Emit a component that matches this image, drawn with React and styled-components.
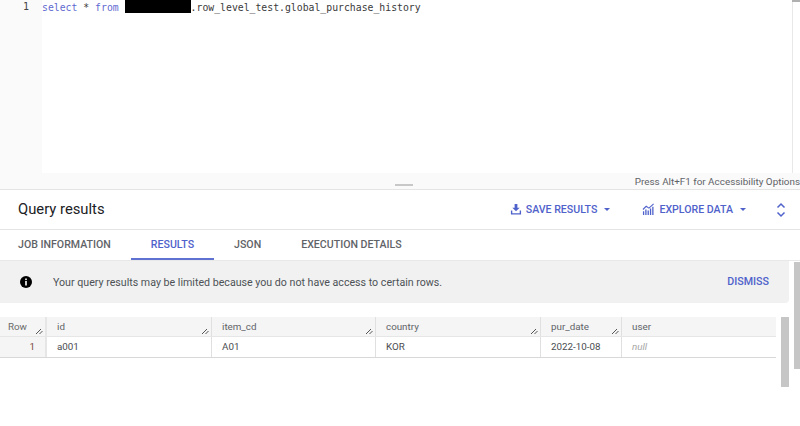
import React from 'react'
import styled, { createGlobalStyle } from 'styled-components'

const GlobalStyle = createGlobalStyle`
  html, body {
    margin: 0;
    padding: 0;
    background: #fff;
  }
  body {
    font-family: Roboto, "Liberation Sans", sans-serif;
    color: #3c4043;
    overflow: hidden;
  }
`

const Page = styled.div`
  width: 800px;
  height: 426px;
  overflow: hidden;
  background: #fff;
`

const Editor = styled.div`
  position: relative;
  height: 189px;
  display: flex;
  flex-direction: column;
  border-bottom: 1px solid #e4e4e4;
  background: #fafafa;
`

const EditorBody = styled.div`
  height: 173px;
  display: flex;
`

const Gutter = styled.div`
  width: 42px;
  padding: 0 13px 0 0;
  box-sizing: border-box;
  text-align: right;
  font-family: "DejaVu Sans Mono", monospace;
  font-size: 10px;
  line-height: 14px;
  color: #444;
`

const Code = styled.div`
  flex: 1;
  background: #fff;
  font-family: "DejaVu Sans Mono", monospace;
  font-size: 9.8px;
  line-height: 14px;
  white-space: pre;
  color: #3a3a3a;
`

const Keyword = styled.span`
  color: #5f6ad0;
`

const Redacted = styled.span`
  display: inline-block;
  width: 66px;
  height: 13px;
  vertical-align: -2px;
  background: #000;
`

const Minimap = styled.div`
  width: 8px;
  border-left: 1px solid #e8e8e8;
  margin-left: auto;
  background: #fff;
  box-sizing: border-box;
`

const MinimapThumb = styled.div`
  position: absolute;
  top: 0;
  right: 0;
  width: 8px;
  height: 2px;
  background: #b0b0b0;
`

const EditorFooter = styled.div`
  height: 16px;
  display: flex;
  align-items: center;
  justify-content: flex-end;
  font-size: 9.9px;
  color: #5f6368;
  white-space: nowrap;
`

const Grip = styled.div`
  position: absolute;
  left: 395px;
  bottom: 3px;
  width: 18px;
  height: 2px;
  background: #c8c8c8;
`

const ResultsHeader = styled.div`
  height: 39px;
  display: flex;
  align-items: center;
  padding: 0 14px 0 18px;
  border-bottom: 1px solid #e4e4e4;
`

const Title = styled.div`
  font-size: 14.8px;
  color: #202124;
  flex: 1;
  padding-bottom: 1px;
`

const HeaderButton = styled.div`
  display: flex;
  align-items: center;
  gap: 4px;
  margin-right: ${p => p.$gap}px;
  font-size: 10.6px;
  font-weight: 500;
  color: #4f62cb;
  white-space: nowrap;
`

const Caret = styled.span`
  width: 0;
  height: 0;
  margin-left: 3px;
  border-left: 3.5px solid transparent;
  border-right: 3.5px solid transparent;
  border-top: 3.5px solid #4f62cb;
`

const Tabs = styled.div`
  height: 30px;
  display: flex;
  margin-left: -2px;
  border-bottom: 1px solid #e8e8e8;
`

const Tab = styled.div`
  padding: 0 20px;
  height: 30px;
  box-sizing: border-box;
  display: flex;
  align-items: center;
  font-size: 10.6px;
  font-weight: 500;
  white-space: nowrap;
  color: ${p => (p.$active ? '#4f62cb' : '#5f6368')};
  border-bottom: 2px solid ${p => (p.$active ? '#5f72d2' : 'transparent')};
`

const Lower = styled.div`
  position: relative;
  height: 165px;
`

const Banner = styled.div`
  width: 789px;
  height: 42px;
  display: flex;
  align-items: center;
  background: #f1f1f1;
  border-radius: 0 0 4px 0;
`

const InfoIcon = styled.svg`
  width: 14px;
  height: 14px;
  margin-left: 19px;
  margin-right: 20px;
`

const BannerText = styled.div`
  flex: 1;
  font-size: 10.65px;
  color: #4d5156;
`

const Dismiss = styled.div`
  margin-right: 20px;
  margin-top: -2px;
  font-size: 10.7px;
  font-weight: 500;
  color: #4f62cb;
`

const Table = styled.div`
  width: 776px;
  margin-top: 14px;
`

const Row = styled.div`
  display: flex;
  height: ${p => (p.$head ? 20 : 21)}px;
  box-sizing: border-box;
  background: ${p => (p.$head ? '#f5f5f5' : '#fff')};
  border-bottom: ${p => (p.$head ? '1px solid #e6e6e6' : '1px solid #d8d8d8')};
`

const Cell = styled.div`
  position: relative;
  width: ${p => p.$w}px;
  flex: none;
  box-sizing: border-box;
  padding-left: 10px;
  padding-bottom: 1px;
  display: flex;
  align-items: center;
  font-size: 9.8px;
  color: ${p => (p.$head ? '#5f6368' : '#4a4d50')};
  border-right: ${p => (p.$last ? 'none' : '1px solid #e0e0e0')};
`

const RowHeadCell = styled(Cell)`
  padding-left: 8px;
  background: #f5f5f5;
  border-right: 2px solid #e6e6e6;
  color: ${p => (p.$head ? '#6b6b6b' : '#7a4a40')};
  justify-content: ${p => (p.$head ? 'flex-start' : 'flex-end')};
  padding-right: ${p => (p.$head ? 0 : 10)}px;
`

const NullValue = styled.span`
  font-style: italic;
  color: #a6a6a6;
`

const ResizeHandle = styled.svg`
  position: absolute;
  right: 2px;
  bottom: 1px;
  width: 8px;
  height: 8px;
`

const Scrollbar = styled.div`
  position: absolute;
  left: ${p => p.$left}px;
  top: ${p => p.$top}px;
  width: ${p => p.$w}px;
  height: ${p => p.$h}px;
  background: #c6c6c6;
`

const Handle = () => (
  <ResizeHandle viewBox="0 0 8 8">
    <path d="M1 7L6 2M4.5 7L7.5 4" stroke="#555" strokeWidth="1" fill="none" />
  </ResizeHandle>
)

const columns = [
  { name: 'id', width: 165, value: 'a001' },
  { name: 'item_cd', width: 164, value: 'A01' },
  { name: 'country', width: 165, value: 'KOR' },
  { name: 'pur_date', width: 81, value: '2022-10-08' },
  { name: 'user', width: 154, value: null },
]

export default function App() {
  return (
    <Page>
      <GlobalStyle />
      <Editor>
        <EditorBody>
          <Gutter>1</Gutter>
          <Code>
            <Keyword>select</Keyword> * <Keyword>from</Keyword> <Redacted />.row_level_test.global_purchase_history
          </Code>
          <Minimap />
        </EditorBody>
        <MinimapThumb />
        <EditorFooter>Press Alt+F1 for Accessibility Options</EditorFooter>
        <Grip />
      </Editor>

      <ResultsHeader>
        <Title>Query results</Title>
        <HeaderButton $gap={32}>
          <svg width="12" height="13" viewBox="0 0 13 14">
            <path d="M5 1h3v4h2.500L6.500 9 2.500 5H5zM1 8v4.500h11V8h-1.500v3h-8V8z" fill="#4f62cb" />
          </svg>
          SAVE RESULTS
          <Caret />
        </HeaderButton>
        <HeaderButton $gap={30}>
          <svg width="13" height="13" viewBox="0 0 14 14">
            <path d="M1 13V9h1.400v4zM3.500 13V7h1.400v6zM6 13V8h1.400v5zM8.500 13V6h1.400v7zM11 13V4h1.400v9z" fill="#4f62cb" />
            <path d="M1 7L4.500 3.500L7.500 5.500L12.500 1" stroke="#4f62cb" strokeWidth="1.200" fill="none" />
          </svg>
          EXPLORE DATA
          <Caret />
        </HeaderButton>
        <svg width="10" height="16" viewBox="0 0 10 16">
          <path d="M1.500 5.500L5 2L8.500 5.500M1.500 10.500L5 14L8.500 10.500" stroke="#4f62cb" strokeWidth="1.500" fill="none" />
        </svg>
      </ResultsHeader>

      <Tabs>
        <Tab>JOB INFORMATION</Tab>
        <Tab $active>RESULTS</Tab>
        <Tab>JSON</Tab>
        <Tab>EXECUTION DETAILS</Tab>
      </Tabs>

      <Lower>
        <Banner>
          <InfoIcon viewBox="0 0 14 14">
            <circle cx="7" cy="7" r="6" fill="#000" />
            <rect x="6.200" y="6" width="1.600" height="4.500" fill="#fff" />
            <rect x="6.200" y="3.500" width="1.600" height="1.600" fill="#fff" />
          </InfoIcon>
          <BannerText>Your query results may be limited because you do not have access to certain rows.</BannerText>
          <Dismiss>DISMISS</Dismiss>
        </Banner>

        <Table>
          <Row $head>
            <RowHeadCell $head $w={47}>
              Row
              <Handle />
            </RowHeadCell>
            {columns.map((col, i) => (
              <Cell key={col.name} $head $w={col.width} $last={i === columns.length - 1}>
                {col.name}
                {i < columns.length - 1 && <Handle />}
              </Cell>
            ))}
          </Row>
          <Row>
            <RowHeadCell $w={47}>1</RowHeadCell>
            {columns.map((col, i) => (
              <Cell key={col.name} $w={col.width} $last={i === columns.length - 1}>
                {col.value === null ? <NullValue>null</NullValue> : col.value}
              </Cell>
            ))}
          </Row>
        </Table>

        <Scrollbar $left={781} $top={56} $w={8} $h={70} />
        <Scrollbar $left={794} $top={1} $w={6} $h={107} />
      </Lower>
    </Page>
  )
}
